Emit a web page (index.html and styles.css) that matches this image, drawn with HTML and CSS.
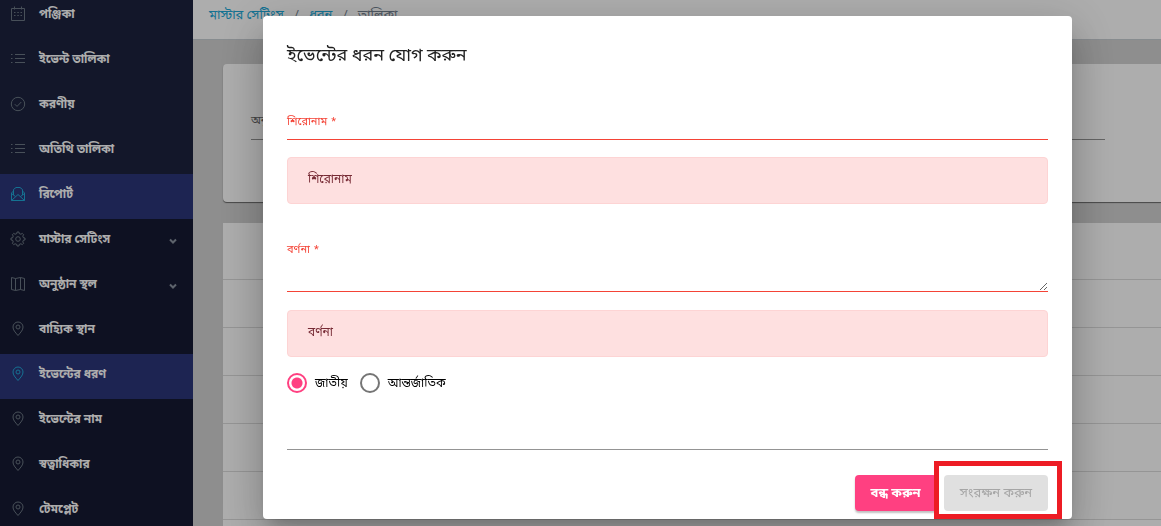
FILE: index.html
```html
<!DOCTYPE html>
<html lang="bn">
<head>
  <meta charset="UTF-8">
  <meta name="viewport" content="width=device-width, initial-scale=1.0">
  <title>ইভেন্টের ধরন</title>
  <link rel="stylesheet" href="styles.css">
</head>
<body>
  <!-- icon set -->
  <svg class="sprite" aria-hidden="true">
    <symbol id="calendar" viewBox="0 0 16 16"><path d="M1.500 2.500h13v12h-13zM4.500 .5v3M11.500 .5v3"/><path d="M4 6.500h1.500M7.300 6.500h1.500M10.500 6.500h1.500M4 9.500h1.500M7.300 9.500h1.500M10.500 9.500h1.500"/></symbol>
    <symbol id="list" viewBox="0 0 16 16"><path d="M1 3.500h1.500M1 7.500h1.500M1 11.500h1.500M5 3.500h10M5 7.500h10M5 11.500h10"/></symbol>
    <symbol id="check" viewBox="0 0 16 16"><circle cx="8" cy="8" r="6.700"/><path d="M4.800 8.200l2.200 2.200 4.300-4.400"/></symbol>
    <symbol id="mail" viewBox="0 0 16 16"><path d="M3.500 9V3.500L6 1.500h4l2.500 2V9M3.500 5L1.500 7v7.500h13V7l-2-2M1.500 7.500l4 3M14.500 7.500l-4 3M1.500 14.500L8 8.500l6.500 6"/></symbol>
    <symbol id="gear" viewBox="0 0 16 16"><circle cx="8" cy="8" r="2.300"/><path d="M6.900 2.500L7 1h2l.1 1.500 1.900.8 1.200-1 1.500 1.500-1 1.200.8 1.900 1.500.1v2l-1.500.1-.8 1.900 1 1.200-1.500 1.500-1.200-1-1.900.8L9 15H7l-.1-1.500-1.900-.8-1.200 1-1.500-1.500 1-1.200-.8-1.900L1 9V7l1.500-.1.8-1.900-1-1.200 1.500-1.500 1.200 1z"/></symbol>
    <symbol id="map" viewBox="0 0 16 16"><path d="M1.500 1.500l4 1 5-1 4 1v12l-4-1-5 1-4-1zM5.500 2.500v12M10.500 1.500v12"/></symbol>
    <symbol id="pin" viewBox="0 0 16 16"><path d="M8 14.500C5 11 3 9 3 6a5 5 0 0 1 10 0c0 3-2 5-5 8.500z"/><circle cx="8" cy="6" r="2"/></symbol>
    <symbol id="chevron" viewBox="0 0 8 8"><path d="M1 2.500l3 3 3-3"/></symbol>
  </svg>

  <div class="layout">
    <nav class="sidebar">
      <a class="nav-link" href="#"><svg class="icon"><use href="#calendar"/></svg>পঞ্জিকা</a>
      <a class="nav-link" href="#"><svg class="icon"><use href="#list"/></svg>ইভেন্ট তালিকা</a>
      <a class="nav-link" href="#"><svg class="icon"><use href="#check"/></svg>করণীয়</a>
      <a class="nav-link" href="#"><svg class="icon"><use href="#list"/></svg>অতিথি তালিকা</a>
      <a class="nav-link active" href="#"><svg class="icon"><use href="#mail"/></svg>রিপোর্ট</a>
      <div class="nav-group">
        <a class="nav-link" href="#"><svg class="icon"><use href="#gear"/></svg>মাস্টার সেটিংস<svg class="chevron"><use href="#chevron"/></svg></a>
        <a class="nav-link" href="#"><svg class="icon"><use href="#map"/></svg>অনুষ্ঠান স্থল<svg class="chevron"><use href="#chevron"/></svg></a>
        <a class="nav-link" href="#"><svg class="icon"><use href="#pin"/></svg>বাহ্যিক স্থান</a>
        <a class="nav-link active" href="#"><svg class="icon"><use href="#pin"/></svg>ইভেন্টের ধরণ</a>
        <a class="nav-link" href="#"><svg class="icon"><use href="#pin"/></svg>ইভেন্টের নাম</a>
        <a class="nav-link" href="#"><svg class="icon"><use href="#pin"/></svg>স্বত্বাধিকার</a>
        <a class="nav-link" href="#"><svg class="icon"><use href="#pin"/></svg>টেমপ্লেট</a>
      </div>
    </nav>

    <main class="main">
      <div class="breadcrumb">
        <a href="#">মাস্টার সেটিংস</a><span>/</span><a href="#">ধরন</a><span>/</span><span>তালিকা</span>
      </div>
      <div class="content">
        <div class="card">
          <label for="search">অনুষ্ঠান</label>
          <input id="search" class="line-input" type="text">
        </div>
        <div class="rows">
          <div class="row head"></div>
          <div class="row"></div>
          <div class="row"></div>
          <div class="row"></div>
          <div class="row"></div>
          <div class="row"></div>
          <div class="row"></div>
        </div>
      </div>
    </main>
  </div>

  <div class="backdrop">
    <form class="modal" role="dialog" aria-labelledby="modal-title">
      <h2 id="modal-title">ইভেন্টের ধরন যোগ করুন</h2>

      <div class="field">
        <label for="title">শিরোনাম<span class="required">*</span></label>
        <input id="title" class="line-input invalid" type="text">
      </div>
      <div class="alert">শিরোনাম</div>

      <div class="field field-area">
        <label for="description">বর্ণনা<span class="required">*</span></label>
        <textarea id="description" class="line-input invalid"></textarea>
      </div>
      <div class="alert">বর্ণনা</div>

      <div class="radios">
        <label><input type="radio" name="scope" checked>জাতীয়</label>
        <label><input type="radio" name="scope">আন্তর্জাতিক</label>
      </div>
      <input class="line-input extra" type="text" aria-label="ধরন">

      <div class="actions">
        <button class="btn btn-close" type="button">বন্ধ করুন</button>
        <div class="save">
          <button class="btn btn-save" type="submit" disabled>সংরক্ষন করুন</button>
        </div>
      </div>
    </form>
  </div>
</body>
</html>
```

FILE: styles.css
```css
* {
  box-sizing: border-box;
}
body {
  margin: 0;
  font-family: Roboto, "Noto Sans Bengali", "Liberation Sans", sans-serif;
  font-size: 12px;
  line-height: 20px;
  background: #d1d1d1;
  overflow: hidden;
}
a {
  color: #20a8d8;
  text-decoration: none;
}
svg {
  fill: none;
  stroke: currentColor;
}
.sprite {
  display: none;
}
.layout {
  display: flex;
  height: 100vh;
  overflow: hidden;
}

/* sidebar */
.sidebar {
  flex: 0 0 193px;
  margin-top: -6px;
  background: #1c233f;
}
.nav-group {
  background: #161a33;
}
.nav-link {
  display: flex;
  align-items: center;
  height: 45px;
  padding: 0 16px 5px 10px;
  color: #fff;
  font-weight: bold;
}
.nav-link.active {
  background: #2c357a;
}
.icon {
  width: 16px;
  height: 16px;
  margin-right: 13px;
  color: #6b7783;
}
.active .icon {
  color: #20a8d8;
}
.chevron {
  width: 8px;
  height: 8px;
  margin: 4px 0 0 auto;
  color: #8a93a0;
  stroke-width: 2;
}

/* page behind the dialog */
.main {
  flex: 1;
  min-width: 0;
}
.breadcrumb {
  display: flex;
  gap: 10px;
  height: 40px;
  padding: 5px 16px;
  background: #fff;
  border-bottom: 1px solid #c8ced3;
  font-size: 13px;
  color: #73818f;
}
.content {
  padding: 24px 0 0 30px;
}
.card {
  height: 138px;
  margin-bottom: 21px;
  padding: 48px 56px 0 28px;
  background: #fff;
  border-radius: 4px 0 0 4px;
  box-shadow: 0 1px 1px rgba(0, 0, 0, .5);
  font-size: 11px;
  color: #666;
}
.card label {
  display: block;
  line-height: 18px;
}
.rows {
  background: #fff;
}
.row {
  height: 48px;
  border-bottom: 1px solid #dcdcdc;
}
.row.head {
  height: 57px;
}

/* dialog */
.backdrop {
  position: fixed;
  inset: 0;
  padding: 16px 89px 0 263px;
  background: rgba(0, 0, 0, .32);
}
.modal {
  padding: 23px 24px 8px;
  background: #fff;
  border-radius: 4px;
  box-shadow: 0 11px 15px -7px rgba(0, 0, 0, .2), 0 24px 38px 3px rgba(0, 0, 0, .14), 0 9px 46px 8px rgba(0, 0, 0, .12);
}
h2 {
  margin: 0 0 42px;
  font-size: 18px;
  line-height: 32px;
  font-weight: normal;
  color: #212121;
}
.field label {
  display: block;
  font-size: 11px;
  line-height: 18px;
  color: #f44336;
}
.required {
  margin-left: 4px;
}
.line-input {
  display: block;
  width: 100%;
  height: 10px;
  padding: 0;
  border: 0;
  border-bottom: 1px solid #949494;
  outline: 0;
  background: none;
  font: inherit;
}
.line-input.invalid {
  height: 9px;
  border-color: #f44336;
}
textarea.line-input.invalid {
  height: 33px;
  resize: vertical;
}
.alert {
  height: 47px;
  margin: 17px 0 37px;
  padding: 11px 20px;
  background: #fee0e0;
  border: 1px solid #fdd4d4;
  border-radius: 4px;
  color: #772b35;
}
.field-area + .alert {
  margin: 18px 0 15px;
}
.radios {
  display: flex;
  gap: 12px;
}
.radios label {
  display: flex;
  align-items: center;
  gap: 8px;
  height: 22px;
}
.radios input {
  appearance: none;
  width: 20px;
  height: 20px;
  margin: 0;
  border: 2px solid #757575;
  border-radius: 50%;
}
.radios input:checked {
  border-color: #ff4081;
  background: radial-gradient(#ff4081 5px, transparent 6px);
}
.extra {
  height: 56px;
}
.actions {
  display: flex;
  justify-content: flex-end;
  gap: 7px;
  margin-top: 25px;
}
.btn {
  height: 36px;
  padding: 0 16px;
  border: 0;
  border-radius: 4px;
  font: inherit;
  font-size: 13px;
}
.btn-close {
  background: #ff4081;
  color: #fff;
  font-weight: bold;
  box-shadow: 0 2px 2px rgba(0, 0, 0, .25);
}
.btn-save {
  background: #e0e0e0;
  color: #a6a6a6;
}
.save {
  position: relative;
}
/* marker frame around the save button */
.save::after {
  content: "";
  position: absolute;
  inset: -14px -14px -8px -10px;
  border: 5px solid #ed1c24;
  pointer-events: none;
}
```
